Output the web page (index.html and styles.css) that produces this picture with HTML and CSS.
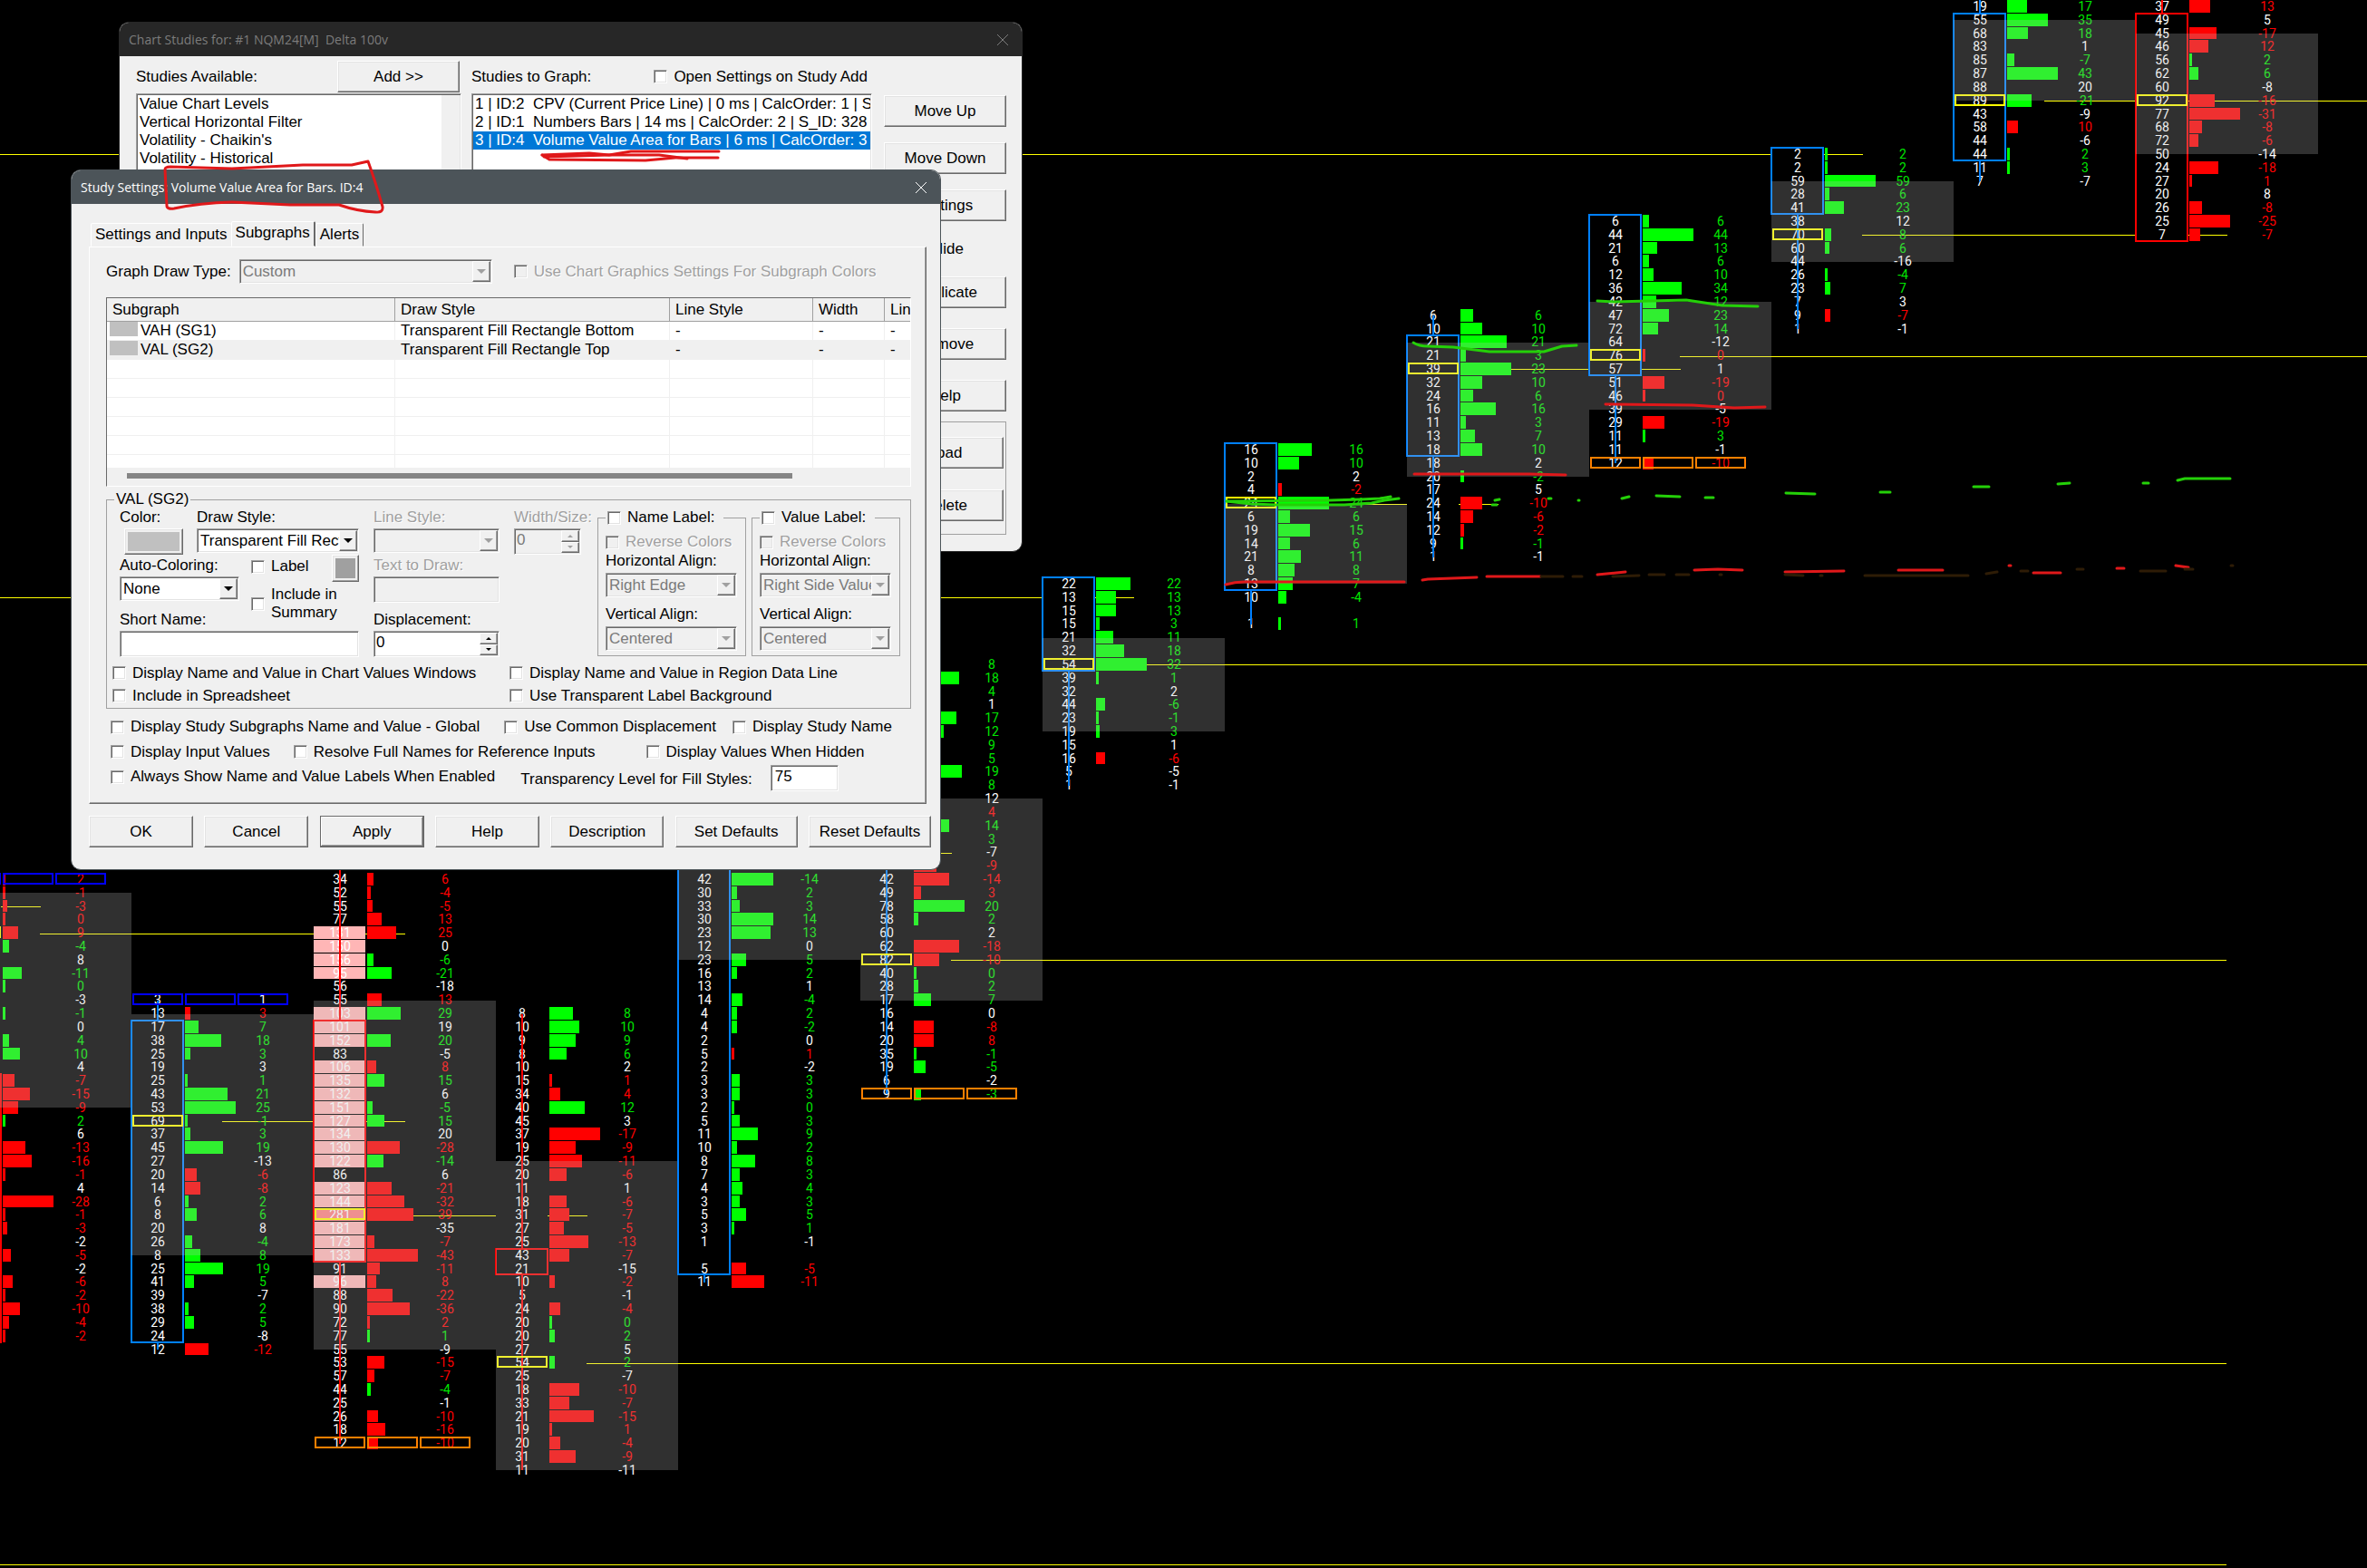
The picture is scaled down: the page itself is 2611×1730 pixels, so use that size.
FILE: index.html
```html
<!DOCTYPE html>
<html lang="en">
<head>
<meta charset="utf-8">
<title>Chart Studies</title>
<link rel="stylesheet" href="styles.css">
</head>
<body>
<main class="desktop">
  <svg class="chart" id="chart" role="img" aria-label="Numbers Bars chart"></svg>

  <section class="window studies" aria-labelledby="studies-title">
    <header class="titlebar titlebar-inactive">
      <h1 class="title" id="studies-title">Chart Studies for: #1 NQM24[M]&nbsp; Delta 100v</h1>
      <button class="close" aria-label="Close"><svg width="14" height="14" viewBox="0 0 14 14"><path d="M1 1L13 13M13 1L1 13"/></svg></button>
    </header>
    <div class="studies-body">
      <div class="pane pane-available">
        <div class="pane-head">
          <label for="available">Studies Available:</label>
          <button class="btn btn-add">Add &gt;&gt;</button>
        </div>
        <div class="listbox">
          <select id="available" multiple size="4">
            <option>Value Chart Levels</option>
            <option>Vertical Horizontal Filter</option>
            <option>Volatility - Chaikin's</option>
            <option>Volatility - Historical</option>
          </select>
          <span class="gutter"></span>
        </div>
      </div>
      <div class="pane pane-graph">
        <div class="pane-head">
          <label for="tograph">Studies to Graph:</label>
          <label class="check"><input type="checkbox">Open Settings on Study Add</label>
        </div>
        <div class="listbox">
          <select id="tograph" multiple size="4">
            <option>1 | ID:2&nbsp; CPV (Current Price Line) | 0 ms | CalcOrder: 1 | S</option>
            <option>2 | ID:1&nbsp; Numbers Bars | 14 ms | CalcOrder: 2 | S_ID: 328</option>
            <option selected>3 | ID:4&nbsp; Volume Value Area for Bars | 6 ms | CalcOrder: 3</option>
          </select>
        </div>
      </div>
      <div class="side">
        <div class="side-stack">
          <button class="btn">Move Up</button>
          <button class="btn">Move Down</button>
          <button class="btn">Settings</button>
        </div>
        <label class="check side-hide"><input type="checkbox">Hide</label>
        <div class="side-stack side-stack-wide">
          <button class="btn">Duplicate</button>
          <button class="btn">Remove</button>
          <button class="btn">Help</button>
        </div>
        <div class="side-group">
          <button class="btn">Load</button>
          <button class="btn">Delete</button>
        </div>
      </div>
    </div>
  </section>

  <section class="window settings" aria-labelledby="settings-title">
    <header class="titlebar">
      <h2 class="title" id="settings-title">Study Settings: Volume Value Area for Bars. ID:4</h2>
      <button class="close" aria-label="Close"><svg width="14" height="14" viewBox="0 0 14 14"><path d="M1 1L13 13M13 1L1 13"/></svg></button>
    </header>
    <form class="settings-body">
      <div class="tabs" role="tablist">
        <button type="button" class="tab" role="tab">Settings and Inputs</button>
        <button type="button" class="tab tab-active" role="tab" aria-selected="true">Subgraphs</button>
        <button type="button" class="tab" role="tab">Alerts</button>
      </div>
      <div class="panel">
        <div class="type-row">
          <label for="gdt">Graph Draw Type:</label>
          <span class="combo combo-off combo-type"><select id="gdt" disabled><option>Custom</option></select><span class="arrow"></span></span>
          <label class="check off"><input type="checkbox" disabled>Use Chart Graphics Settings For Subgraph Colors</label>
        </div>

        <div class="grid-view">
          <div class="grid-rows">
            <table class="subgraphs">
              <colgroup><col class="c-name"><col class="c-style"><col class="c-line"><col class="c-width"><col class="c-rest"></colgroup>
              <thead><tr><th>Subgraph</th><th>Draw Style</th><th>Line Style</th><th>Width</th><th>Lin</th></tr></thead>
              <tbody>
                <tr><td class="named"><span class="swatch"></span>VAH (SG1)</td><td>Transparent Fill Rectangle Bottom</td><td>-</td><td>-</td><td>-</td></tr>
                <tr class="picked"><td class="named"><span class="swatch"></span>VAL (SG2)</td><td>Transparent Fill Rectangle Top</td><td>-</td><td>-</td><td>-</td></tr>
                <tr><td></td><td></td><td></td><td></td><td></td></tr>
                <tr><td></td><td></td><td></td><td></td><td></td></tr>
                <tr><td></td><td></td><td></td><td></td><td></td></tr>
                <tr><td></td><td></td><td></td><td></td><td></td></tr>
                <tr><td></td><td></td><td></td><td></td><td></td></tr>
                <tr><td></td><td></td><td></td><td></td><td></td></tr>
              </tbody>
            </table>
          </div>
          <div class="scroll"><span class="thumb"></span></div>
        </div>

        <fieldset class="group">
          <legend>VAL (SG2)</legend>
          <div class="editor">
            <div class="col col-main">
              <div class="pair">
                <div class="field field-color"><label for="color">Color:</label><button type="button" id="color" class="btn color-btn" aria-label="Color"><span></span></button></div>
                <div class="field grow"><label for="ds">Draw Style:</label><span class="combo"><select id="ds"><option>Transparent Fill Rectangle Top</option></select><span class="arrow"></span></span></div>
              </div>
              <div class="pair">
                <div class="field field-auto"><label for="auto">Auto-Coloring:</label><span class="combo"><select id="auto"><option>None</option></select><span class="arrow"></span></span></div>
                <div class="flags">
                  <div class="flag-row"><label class="check"><input type="checkbox">Label</label><button type="button" class="btn label-color" aria-label="Label color"><span></span></button></div>
                  <label class="check two-line"><input type="checkbox"><span>Include in<br>Summary</span></label>
                </div>
              </div>
              <div class="field"><label for="short">Short Name:</label><input class="text" type="text" id="short"></div>
            </div>
            <div class="col col-line">
              <div class="field off"><label for="ls">Line Style:</label><span class="combo combo-off"><select id="ls" disabled><option></option></select><span class="arrow"></span></span></div>
              <div class="field off"><label for="ttd">Text to Draw:</label><input class="text" type="text" id="ttd" disabled></div>
              <div class="field"><label for="disp">Displacement:</label><span class="spin"><input type="text" id="disp" value="0"><span class="steps"><button type="button" class="up" aria-label="Up"></button><button type="button" class="down" aria-label="Down"></button></span></span></div>
            </div>
            <div class="col col-width">
              <div class="field off"><label for="ws">Width/Size:</label><span class="spin"><input type="text" id="ws" value="0" disabled><span class="steps"><button type="button" class="up" disabled aria-label="Up"></button><button type="button" class="down" disabled aria-label="Down"></button></span></span></div>
            </div>
            <fieldset class="subgroup">
              <legend><label class="check"><input type="checkbox">Name Label:</label></legend>
              <label class="check off"><input type="checkbox" disabled>Reverse Colors</label>
              <div class="field"><label for="nh">Horizontal Align:</label><span class="combo combo-off"><select id="nh" disabled><option>Right Edge</option></select><span class="arrow"></span></span></div>
              <div class="field"><label for="nv">Vertical Align:</label><span class="combo combo-off"><select id="nv" disabled><option>Centered</option></select><span class="arrow"></span></span></div>
            </fieldset>
            <fieldset class="subgroup">
              <legend><label class="check"><input type="checkbox">Value Label:</label></legend>
              <label class="check off"><input type="checkbox" disabled>Reverse Colors</label>
              <div class="field"><label for="vh">Horizontal Align:</label><span class="combo combo-off"><select id="vh" disabled><option>Right Side Values</option></select><span class="arrow"></span></span></div>
              <div class="field"><label for="vv">Vertical Align:</label><span class="combo combo-off"><select id="vv" disabled><option>Centered</option></select><span class="arrow"></span></span></div>
            </fieldset>
          </div>
          <div class="display-grid">
            <label class="check"><input type="checkbox">Display Name and Value in Chart Values Windows</label>
            <label class="check"><input type="checkbox">Display Name and Value in Region Data Line</label>
            <label class="check"><input type="checkbox">Include in Spreadsheet</label>
            <label class="check"><input type="checkbox">Use Transparent Label Background</label>
          </div>
        </fieldset>

        <div class="options options-a">
          <label class="check"><input type="checkbox">Display Study Subgraphs Name and Value - Global</label>
          <label class="check"><input type="checkbox">Use Common Displacement</label>
          <label class="check"><input type="checkbox">Display Study Name</label>
        </div>
        <div class="options options-b">
          <label class="check"><input type="checkbox">Display Input Values</label>
          <label class="check"><input type="checkbox">Resolve Full Names for Reference Inputs</label>
          <label class="check"><input type="checkbox">Display Values When Hidden</label>
        </div>
        <div class="options options-c">
          <label class="check"><input type="checkbox">Always Show Name and Value Labels When Enabled</label>
          <label for="tl">Transparency Level for Fill Styles:</label>
          <input class="text" type="text" id="tl" value="75">
        </div>
      </div>
      <div class="actions">
        <button type="button" class="btn">OK</button>
        <button type="button" class="btn">Cancel</button>
        <button type="button" class="btn btn-default">Apply</button>
        <button type="button" class="btn">Help</button>
        <button type="button" class="btn btn-mid">Description</button>
        <button type="button" class="btn btn-wide">Set Defaults</button>
        <button type="button" class="btn btn-wide">Reset Defaults</button>
      </div>
    </form>
  </section>

  <svg class="ink" aria-hidden="true">
    <g class="pen-red">
      <path d="M182 187Q182 184 188 184L256 186L334 182L388 182L406 178Q414 200 422 228Q423 235 414 234Q394 233 374 226L320 226L256 223Q220 224 192 230Q184 231 184 227Z"/>
      <path d="M598 171L650 169L672 171L696 167L793 167"/>
      <path d="M598 171L606 176L712 177L745 174L792 174"/>
      <path d="M600 173L672 171L727 171L758 175"/>
      <path d="M1352 645Q1362 642 1373 642L1549 642"/>
      <path d="M1560 523L1687 523L1727 524"/>
      <path d="M1771 446L1867 447L1913 450L1947 449"/>
      <path d="M1569 640L1575 639L1629 637M1640 636H1699M1762 634L1793 631M1869 629L1895 628L1922 629M1969 631L2034 630M2094 629H2143M2216 624H2218M2243 632H2273M2335 627H2343M2400 624L2414 626"/>
    </g>
    <path class="pen-faint" d="M1700 636H1724M1735 636H1745M1779 636L1808 635M1819 634H1836M1849 634H1863M1897 634H1899M1969 634L1989 635M2008 635H2010M2057 635H2171M2191 633L2203 631M2229 630H2237M2291 628H2298M2361 630H2389M2410 628H2419M2461 624H2463"/>
    <g class="pen-green">
      <path d="M1353 553L1467 552L1500 551L1522 550L1534 548"/>
      <path d="M1353 553L1380 556L1407 557L1483 557L1513 555L1527 552L1543 550"/>
      <path d="M1559 378Q1565 382 1575 382L1603 383L1643 388L1703 388L1723 382L1739 381"/>
      <path d="M1762 332L1780 333L1860 331L1900 337L1939 338"/>
      <path d="M1646 557H1651M1649 552L1654 551M1708 550H1711M1741 552H1742M1789 550L1797 548M1827 547L1853 548M1881 549H1890M1970 544L2002 545M2074 543H2085M2177 537H2194M2270 534L2283 533M2364 533H2370M2402 530L2410 528L2460 528"/>
    </g>
  </svg>
</main>
<script src="chart.js"></script>
</body>
</html>
```
FILE: styles.css
```css
* {
  box-sizing: border-box;
}

body {
  margin: 0;
  background: #000;
  color: #000;
  font: 17px/20px "Liberation Sans", Arial, sans-serif;
}

button,
input,
select {
  font: inherit;
  color: inherit;
}

/* chart */
.desktop {
  position: relative;
  height: 100vh;
  overflow: hidden;
}

.chart {
  display: block;
  width: 100%;
  height: 100%;
  font: 14px Roboto, "Liberation Sans", sans-serif;
  text-anchor: middle;
}

.chart rect,
.chart line {
  shape-rendering: crispEdges;
}

.level { stroke: #ff0; stroke-width: 1; }
.cell { fill: #000; }
.cell-hot { fill: #ffb6b6; }
.cell-peak { fill: #ff8080; }
.bar-g { fill: #0f0; }
.bar-r { fill: #f00; }
.num { fill: #fff; }
.num-g { fill: #00e600; }
.num-r { fill: #f00; }
.box { fill: none; stroke-width: 2; }
.poc { stroke: #ff0; }
.high { stroke: #00f; }
.low { stroke: #ff8000; }
.up-candle { stroke: #0080ff; stroke-width: 2; }
.down-candle { stroke: #f00; stroke-width: 2; }
.area { fill: #c0c0c0; fill-opacity: .25; }

/* pen marks drawn over everything */
.ink {
  position: absolute;
  z-index: 3;
  top: 0;
  left: 0;
  width: 100%;
  height: 100%;
  pointer-events: none;
  fill: none;
  stroke-width: 3;
  stroke-linecap: round;
  stroke-linejoin: round;
}

.pen-red { stroke: #e0181a; }
.pen-green { stroke: #24d008; }
.pen-faint { stroke: #2e1c06; }

/* windows */
.window {
  position: absolute;
  display: flex;
  flex-direction: column;
  overflow: hidden;
  border: 1px solid #4c5459;
  border-radius: 11px;
  background: #f0f0f0;
}

.studies {
  z-index: 1;
  top: 24px;
  left: 131px;
  width: 997px;
  border-color: #272727;
}

.settings {
  z-index: 2;
  top: 187px;
  left: 78px;
  width: 960px;
}

.titlebar {
  display: flex;
  align-items: center;
  justify-content: space-between;
  height: 37px;
  padding: 0 14px 0 10px;
  background: #4c5459;
  color: #fff;
}

.titlebar-inactive {
  background: #272727;
  color: #7c7c7c;
}

.title {
  margin: 0;
  font: 14px/20px "Open Sans", "Noto Sans", sans-serif;
}

.close {
  display: flex;
  padding: 0;
  border: 0;
  background: none;
}

.close svg {
  fill: none;
  stroke: currentColor;
  stroke-width: 1;
}

/* controls */
.btn {
  height: 35px;
  padding: 0;
  border: 1px solid;
  border-color: #fff #696969 #696969 #fff;
  background: #f0f0f0;
  box-shadow: inset -1px -1px #a0a0a0, inset 1px 1px #e3e3e3;
}

.btn-default {
  border-color: #696969;
  box-shadow: inset -1px -1px #696969, inset 1px 1px #fff, inset -2px -2px #a0a0a0;
}

.check {
  display: flex;
  align-items: center;
  gap: 7px;
  white-space: nowrap;
}

.check input {
  flex: none;
  appearance: none;
  width: 15px;
  height: 15px;
  margin: 0;
  border: 1px solid;
  border-color: #a0a0a0 #fff #fff #a0a0a0;
  background: #fff;
  box-shadow: inset 1px 1px #696969, inset -1px -1px #e3e3e3;
}

.check input:disabled {
  background: #f0f0f0;
}

.off {
  color: #a0a0a0;
  text-shadow: 1px 1px #fff;
}

.text,
.combo,
.spin {
  border: 1px solid;
  border-color: #a0a0a0 #fff #fff #a0a0a0;
  background: #fff;
  box-shadow: inset 1px 1px #696969, inset -1px -1px #e3e3e3;
}

.text {
  width: 100%;
  height: 29px;
  padding: 0 4px 3px;
}

.text:disabled {
  background: #f0f0f0;
}

.combo {
  display: flex;
  height: 27px;
  padding: 1px;
}

.combo select {
  flex: 1;
  min-width: 0;
  margin: 0;
  padding: 0 0 0 2px;
  appearance: none;
  border: 0;
  border-radius: 0;
  background: none;
  opacity: 1;
}

.combo-off {
  background: #f0f0f0;
  color: #7a7a7a;
  text-shadow: none;
}

.arrow {
  display: flex;
  flex: none;
  align-items: center;
  justify-content: center;
  width: 20px;
  border: 1px solid;
  border-color: #fff #696969 #696969 #fff;
  background: #f0f0f0;
  box-shadow: inset -1px -1px #a0a0a0;
}

.arrow::before {
  content: "";
  border: 5px solid transparent;
  border-top-color: #000;
  border-bottom: 0;
}

.combo-off .arrow::before {
  border-top-color: #a0a0a0;
}

.spin {
  display: flex;
  height: 29px;
  padding: 1px;
}

.spin input {
  flex: 1;
  min-width: 0;
  padding: 0 1px 3px;
  border: 0;
  background: none;
}

.off .spin {
  background: #f0f0f0;
  color: #7a7a7a;
  text-shadow: none;
}

.steps {
  display: flex;
  flex: none;
  flex-direction: column;
  width: 20px;
}

.steps button {
  display: flex;
  flex: 1;
  align-items: center;
  justify-content: center;
  padding: 0;
  border: 1px solid;
  border-color: #fff #696969 #696969 #fff;
  background: #f0f0f0;
  box-shadow: inset -1px -1px #a0a0a0;
}

.steps button::before {
  content: "";
  border: 3px solid transparent;
}

.steps .up::before { border-bottom-color: #000; border-top: 0; }
.steps .down::before { border-top-color: #000; border-bottom: 0; }
.steps .up:disabled::before { border-bottom-color: #a0a0a0; }
.steps .down:disabled::before { border-top-color: #a0a0a0; }

/* chart studies window */
.studies-body {
  display: flex;
  padding: 4px 17px 18px 18px;
}

.pane-available {
  width: 359px;
  margin-right: 11px;
}

.pane-graph {
  width: 442px;
  margin-right: 13px;
}

.pane-head {
  display: flex;
  align-items: center;
  justify-content: space-between;
  height: 37px;
}

.pane-available .pane-head {
  padding-right: 2px;
}

.pane-graph .pane-head {
  padding-right: 5px;
}

.btn-add {
  width: 135px;
}

.listbox {
  display: flex;
  height: 420px;
  padding: 1px;
  border: 1px solid;
  border-color: #a0a0a0 #fff #fff #a0a0a0;
  background: #fff;
  box-shadow: inset 1px 1px #696969, inset -1px -1px #e3e3e3;
}

.listbox select {
  flex: 1;
  min-width: 0;
  height: 100%;
  padding: 0;
  border: 0;
  outline: 0;
  background: none;
  overflow: hidden;
}

.listbox option {
  min-height: 20px;
  padding: 0 0 0 2px;
  line-height: 20px;
  overflow: hidden;
}

.listbox option:checked {
  background: #0078d7 linear-gradient(#0078d7, #0078d7);
  color: #fff;
}

.gutter {
  width: 20px;
  background: #f0f0f0;
}

.side {
  display: flex;
  flex: 1;
  flex-direction: column;
  padding-top: 39px;
}

.side-stack {
  display: flex;
  flex-direction: column;
  gap: 17px;
}

.side-stack-wide {
  gap: 22px;
}

.side-hide {
  margin: 21px 0 20px 31px;
}

.side-group {
  display: flex;
  flex-direction: column;
  gap: 23px;
  margin-top: 11px;
  padding: 16px 2px 14px;
  border: 1px solid #a0a0a0;
}

/* study settings window */
.settings-body {
  padding: 19px 10px 24px 19px;
}

.tabs {
  display: flex;
  align-items: flex-end;
  height: 28px;
  padding-left: 2px;
}

.tab {
  height: 26px;
  padding: 0 4px;
  border: 1px solid;
  border-color: #fff #696969 transparent #fff;
  border-radius: 2px 2px 0 0;
  background: #f0f0f0;
}

.tab:first-child {
  border-right: 0;
}

.tab-active {
  height: 28px;
  padding: 0 4px 3px;
  border-right-width: 2px;
}

.panel {
  margin-right: 5px;
  padding: 13px 16px 15px 18px;
  border: 1px solid;
  border-color: #fff #696969 #696969 #fff;
  box-shadow: inset -1px -1px #a0a0a0;
}

.type-row {
  display: flex;
  align-items: center;
}

.combo-type {
  width: 279px;
  margin: 0 24px 0 9px;
}

.grid-view {
  margin-top: 15px;
  border: 1px solid;
  border-color: #696969 #fff #fff #696969;
}

.grid-rows {
  height: 187px;
  overflow: hidden;
  background: #fff;
}

.subgraphs {
  width: 100%;
  table-layout: fixed;
  border-collapse: separate;
  border-spacing: 0;
}

.c-name { width: 318px; }
.c-style { width: 303px; }
.c-line { width: 158px; }
.c-width { width: 79px; }

.subgraphs th {
  height: 26px;
  padding: 0 0 0 6px;
  border-right: 1px solid #a0a0a0;
  border-bottom: 1px solid #a0a0a0;
  background: #f0f0f0;
  font-weight: normal;
  text-align: left;
}

.subgraphs td {
  height: 21px;
  padding: 0 0 0 6px;
  border-right: 1px solid #f0f0f0;
  border-bottom: 1px solid #f0f0f0;
  white-space: nowrap;
}

.subgraphs th:last-child,
.subgraphs td:last-child {
  border-right: 0;
}

.subgraphs .named {
  padding-left: 3px;
}

.picked td {
  background: #f0f0f0;
}

.swatch {
  display: inline-block;
  width: 31px;
  height: 16px;
  margin-right: 3px;
  background: #c0c0c0;
  vertical-align: top;
}

.scroll {
  height: 20px;
  padding: 6px 130px 0 22px;
}

.thumb {
  display: block;
  height: 6px;
  background: #858585;
}

fieldset {
  min-width: 0;
  margin: 0;
  padding: 0;
  border: 1px solid #a0a0a0;
}

legend {
  line-height: 16px;
}

.group {
  margin-top: 6px;
}

.group > legend {
  margin-left: 8px;
  padding: 0 2px;
}

.editor {
  display: flex;
  padding: 0 9px 0 14px;
}

.col {
  display: grid;
  grid-template-rows: 53px 60px 53px;
  grid-template-columns: minmax(0, 1fr);
}

.col-main { width: 264px; margin-right: 16px; }
.col-line { width: 139px; margin-right: 16px; }
.col-width { width: 74px; margin-right: 18px; }

.pair {
  display: flex;
}

.field {
  display: flex;
  flex-direction: column;
  min-width: 0;
}

.field > label {
  line-height: 24px;
  white-space: nowrap;
}

.grow {
  flex: 1;
}

.field-color {
  flex: none;
  width: 85px;
}

.field-auto {
  flex: none;
  width: 132px;
}

.color-btn {
  width: 65px;
  height: 30px;
  margin-left: 5px;
  padding: 3px;
}

.color-btn span,
.label-color span {
  display: block;
  height: 100%;
  background: #c0c0c0;
}

.flags {
  flex: 1;
  padding-left: 13px;
}

.flag-row {
  display: flex;
  align-items: flex-start;
  justify-content: space-between;
  height: 34px;
}

.flag-row .check {
  height: 26px;
}

.label-color {
  width: 30px;
  height: 30px;
  padding: 3px;
}

.label-color span {
  background: #a0a0a0;
}

.subgroup {
  flex: none;
  align-self: flex-start;
  width: 164px;
  height: 161px;
  margin-top: 4px;
}

.subgroup + .subgroup {
  margin-left: 6px;
}

.subgroup legend {
  margin-left: 8px;
  padding-right: 10px;
}

.subgroup > .check {
  margin: 9px 0 0 8px;
}

.subgroup .field {
  width: 145px;
  margin: 0 0 8px 8px;
}

.subgroup .field > label {
  padding-bottom: 2px;
  line-height: 22px;
}

.display-grid {
  display: grid;
  grid-template-columns: 438px 1fr;
  grid-auto-rows: 25px;
  padding: 5px 0 1px 6px;
}

.options {
  display: flex;
  align-items: center;
  height: 28px;
  padding-left: 5px;
}

.options-a {
  margin-top: 6px;
}

.options-a label + label {
  margin-left: 27px;
}

.options-a label:last-child {
  margin-left: 18px;
}

.options-b {
  height: 27px;
}

.options-b label + label {
  margin-left: 26px;
}

.options-b label:last-child {
  margin-left: 56px;
}

.options-c > label + label {
  margin: 6px 20px 0 28px;
}

.options-c .text {
  width: 75px;
  margin-top: 2px;
}

.actions {
  display: flex;
  justify-content: space-between;
  margin-top: 13px;
}

.actions .btn {
  width: 115px;
}

.actions .btn-mid {
  width: 125px;
}

.actions .btn-wide {
  width: 135px;
}
```
FILE: chart.js
```js
// Row pitch of the price ladder and width of one bar, in pixels.
const PITCH = 14.815;
const COLUMN = 201;
const FIRST_X = -56;

const rowTop = k => Math.round(k * PITCH);
const rowMid = k => Math.round(k * PITCH + 7.4);

// Each row is "volume delta bar"; "-" means no bar, "." an empty price.
// body and wick are [first row, last row]; area is the value area.
const bars = [
  { start: 65, dir: "down", body: [80, 99], area: [66, 82], poc: 69, high: 65,
    rows: "0 2 r3|0 -1 r3|0 -3 r5|0 0 r3|0 9 r17|0 -4 g7|0 8 -|0 -11 g21|0 0 g3|0 -3 -|0 -1 g3|0 0 -|0 4 g7|0 10 g19|0 4 -|0 -7 r13|0 -15 r30|0 -9 r17|0 2 g3|0 6 -|0 -13 r25|0 -16 r32|0 -1 r3|0 4 -|0 -28 r56|0 -1 r3|0 -3 r5|0 -2 -|0 -5 r9|0 -2 -|0 -6 r11|0 -2 r3|0 -10 r19|0 -4 r7|0 -2 r3" },
  { start: 74, dir: "up", body: [76, 99], wick: [74, 100], area: [75, 93], poc: 83, high: 74,
    rows: "3 1 -|13 3 r6|17 7 g15|38 18 g40|25 3 g6|19 3 -|25 1 g3|43 21 g47|53 25 g56|69 -1 g3|37 3 g6|45 19 g42|27 -13 -|20 -6 r13|14 -8 r17|6 2 g4|8 6 g13|20 8 -|26 -4 g8|8 8 g17|25 19 g42|41 5 g10|39 -7 -|38 2 g4|29 5 g10|24 -8 -|12 -12 r26" },
  { start: 65, dir: "down", body: [76, 93], wick: [62, 107], area: [74, 100], poc: 90, low: 107,
    rows: "34 6 r7|52 -4 r4|55 -5 r6|77 13 r16|131 25 r32|150 0 -|156 -6 g7|95 -21 g27|56 -18 -|55 13 r16|103 29 g37|101 19 -|152 20 g26|83 -5 -|106 8 r10|135 15 g19|132 6 -|151 -5 g6|127 15 g19|134 20 -|130 -28 r36|122 -14 g18|86 6 -|123 -21 r27|144 -32 r41|281 39 r51|181 -35 -|173 -7 r8|133 -43 r56|91 -11 r14|96 8 r10|88 -22 r28|90 -36 r47|72 2 r3|77 1 g3|55 -9 -|53 -15 r19|57 -7 r8|44 -4 g4|25 -1 -|26 -10 r12|18 -16 r20|12 -10 r12" },
  { start: 75, dir: "down", body: [93, 94], wick: [75, 109], area: [86, 109], poc: 101,
    rows: "8 8 g26|10 10 g33|9 9 g29|8 6 g19|10 2 -|15 1 r3|34 4 r12|40 12 g39|45 3 -|37 -17 r56|19 -9 r29|25 -11 r36|20 -6 r19|11 1 -|18 -6 r19|31 -7 r22|27 -5 r16|25 -13 r43|43 -7 r22|21 -15 -|10 -2 r6|5 -1 -|24 -4 r12|20 0 g3|20 2 g6|27 5 -|54 2 g6|25 -7 -|18 -10 r33|33 -7 r22|21 -15 r49|19 1 r3|20 -4 r12|31 -9 r29|11 -11 -" },
  { start: 65, dir: "up", body: [60, 94], wick: [60, 95], area: [60, 71],
    rows: "42 -14 g46|30 2 g6|33 3 g9|30 14 g46|23 13 g43|12 0 -|23 5 g16|16 2 g6|13 1 -|14 -4 g12|4 2 g6|4 -2 g6|2 0 -|5 1 r3|2 -2 -|3 3 g9|3 3 g9|2 0 g3|5 3 g9|11 9 g29|10 2 g6|8 8 g26|7 3 g9|4 4 g12|3 3 g9|5 5 g16|3 1 g3|1 -1 -|.|5 -5 r16|11 -11 r36" },
  { start: 49, dir: "up", wick: [62, 81], area: [59, 74], poc: 71, low: 81,
    rows: "0 8 g22|0 18 g50|0 4 g11|0 1 -|0 17 g47|0 12 g33|0 9 g25|0 5 g14|0 19 g53|0 8 g22|0 12 -|0 4 r11|0 14 g39|0 3 g8|0 -7 -|0 -9 r25|42 -14 r39|49 3 r8|78 20 g56|58 2 g5|60 2 -|62 -18 r50|82 -10 r28|40 0 g3|28 2 g5|17 7 g19|16 0 -|14 -8 r22|20 8 r22|35 -1 g3|19 -5 g13|6 -2 -|9 -3 g8" },
  { start: 43, dir: "up", body: [43, 49], wick: [43, 58], area: [47, 54], poc: 49,
    rows: "22 22 g38|13 13 g22|15 13 g22|15 3 g4|21 11 g19|32 18 g31|54 32 g56|39 1 g3|32 2 -|44 -6 g10|23 -1 g3|19 3 g4|15 1 -|16 -6 r10|5 -5 -|1 -1 -" },
  { start: 33, dir: "up", body: [33, 43], wick: [33, 46], area: [37, 43], poc: 37,
    rows: "16 16 g37|10 10 g23|2 2 -|4 -2 r4|24 24 g56|6 6 g13|19 15 g35|14 6 g13|21 11 g25|8 8 g18|13 7 g16|10 -4 g9|.|1 1 g3" },
  { start: 23, dir: "up", body: [25, 33], wick: [23, 41], area: [25, 35], poc: 27,
    rows: "6 6 g14|10 10 g24|21 21 g51|21 3 g6|39 23 g56|32 10 g24|24 6 g14|16 16 g39|11 3 g6|13 7 g16|18 10 g24|18 2 -|20 -2 g4|17 5 -|24 -10 r24|14 -6 r14|12 -2 r4|9 -1 g3|1 -1 -" },
  { start: 16, dir: "up", body: [16, 27], wick: [16, 34], area: [22, 30], poc: 26, low: 34,
    rows: "6 6 g7|44 44 g56|21 13 g16|6 6 g7|12 10 g12|36 34 g43|42 12 g15|47 23 g29|72 14 g17|64 -12 -|76 0 r3|57 1 -|51 -19 r24|46 0 r3|39 -5 -|29 -19 r24|11 3 g3|11 -1 -|12 -10 r12" },
  { start: 11, dir: "up", body: [11, 15], wick: [11, 24], area: [13, 19], poc: 17,
    rows: "2 2 g3|2 2 g3|59 59 g56|28 6 g5|41 23 g21|38 12 -|70 8 g7|60 6 g5|44 -16 -|26 -4 g3|23 7 g6|7 3 -|9 -7 r6|1 -1 -" },
  { start: 0, dir: "up", body: [1, 11], wick: [-1, 13], area: [1, 7], poc: 7,
    rows: "19 17 g22|55 35 g45|68 18 g23|83 1 -|85 -7 g8|87 43 g56|88 20 -|89 -21 g27|43 -9 -|58 10 r12|44 -6 -|44 2 g3|11 3 g3|7 -7 -" },
  { start: 0, dir: "down", body: [1, 17], wick: [-1, 17], area: [2, 11], poc: 7,
    rows: "37 13 r23|49 5 -|45 -17 r30|46 12 r21|56 2 g3|62 6 g10|60 -8 -|92 -16 r28|77 -31 r56|68 -8 r14|72 -6 r10|50 -14 -|24 -18 r32|27 1 r3|20 8 -|26 -8 r14|25 -25 r45|7 -7 r12" }
];

// Volume levels as [row, from, to].
const levels = [
  [11, 0, 2055], [7, 2255, "100%"], [17, 2054, 2457], [26, 1853, "100%"],
  [27, 1652, 1854], [37, 1451, 1653], [44, 0, 1251], [49, 1250, "100%"],
  [63, 848, 1050], [67, 0, 45], [69, 44, 447], [71, 1049, 2456],
  [83, 245, 447], [90, 446, 648], [101, 647, 2456], [116, 0, 2456]
];

const svg = document.getElementById("chart");

function add(name, className, attributes, text) {
  const node = document.createElementNS("http://www.w3.org/2000/svg", name);
  node.setAttribute("class", className);
  for (const key in attributes) node.setAttribute(key, attributes[key]);
  if (text !== undefined) node.textContent = text;
  svg.append(node);
}

function box(kind, x, k) {
  add("rect", "box " + kind, { x: x + 2, y: rowTop(k) + 1, width: 54, height: 11 });
}

for (const [k, x1, x2] of levels) {
  add("line", "level", { x1, x2, y1: rowMid(k), y2: rowMid(k) });
}

bars.forEach((bar, i) => {
  const x = FIRST_X + i * COLUMN;
  bar.rows.split("|").forEach((row, n) => {
    if (row === ".") return;
    const [volume, delta, size] = row.split(" ");
    const y = rowTop(bar.start + n);
    const height = rowTop(bar.start + n + 1) - y - 1;
    const cell = volume >= 200 ? "cell-peak" : volume >= 95 ? "cell-hot" : "cell";
    add("rect", cell, { x, y, width: 57, height });
    if (volume > 0) add("text", "num", { x: x + 29, y: y + 12 }, volume);
    const tone = size === "-" ? "" : "-" + size[0];
    if (tone) add("rect", "bar" + tone, { x: x + 59, y, width: size.slice(1), height });
    add("text", "num" + tone, { x: x + 145, y: y + 12 }, delta);
  });

  const candle = bar.dir + "-candle";
  const body = bar.body;
  if (body) {
    const y = rowTop(body[0]);
    add("rect", "box " + candle, { x, y, width: 57, height: rowTop(body[1] + 1) - y - 1 });
  }
  if (bar.wick) {
    const [high, low] = bar.wick;
    const spans = body
      ? [[rowMid(high), rowTop(body[0])], [rowTop(body[1] + 1), rowMid(low)]]
      : [[rowMid(high), rowMid(low)]];
    for (const [y1, y2] of spans) {
      if (y2 > y1) add("line", candle, { x1: x + 29, x2: x + 29, y1, y2 });
    }
  }

  if (bar.poc) box("poc", x, bar.poc);
  for (const kind of ["high", "low"]) {
    if (bar[kind]) [0, 58, 116].forEach(dx => box(kind, x + dx, bar[kind]));
  }
  add("rect", "area", {
    x, y: rowMid(bar.area[0]), width: COLUMN, height: rowMid(bar.area[1]) - rowMid(bar.area[0])
  });
});
```
